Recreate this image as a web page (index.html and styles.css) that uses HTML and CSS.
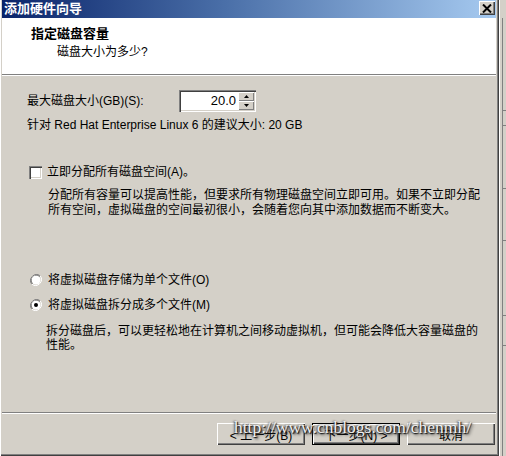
FILE: index.html
```html
<!DOCTYPE html>
<html lang="zh-CN">
<head>
    <meta charset="UTF-8">
    <title>添加硬件向导</title>
    <link rel="stylesheet" href="styles.css">
</head>
<body>

<div class="screen">
    <div class="dialog">
        <div class="titlebar">
            <span class="title">添加硬件向导</span>
            <span class="close">
                <svg width="10" height="9" viewBox="0 0 10 9">
                    <path d="M1 0.5 L9 8.5 M9 0.5 L1 8.5" stroke="#000" stroke-width="2"/>
                </svg>
            </span>
        </div>

        <div class="header">
            <div class="header-title">指定磁盘容量</div>
            <div class="header-sub">磁盘大小为多少?</div>
        </div>

        <div class="body">
            <div class="size-row">
                <label class="size-label" for="size">最大磁盘大小(GB)(S):</label>
                <div class="spin">
                    <input id="size" class="spin-input" type="text" value="20.0">
                    <div class="spin-btns">
                        <span class="spin-btn"><svg width="5" height="3" viewBox="0 0 5 3"><path d="M2.5 0 L5 3 L0 3 Z" fill="#000"/></svg></span>
                        <span class="spin-btn"><svg width="5" height="3" viewBox="0 0 5 3"><path d="M0 0 L5 0 L2.5 3 Z" fill="#000"/></svg></span>
                    </div>
                </div>
            </div>
            <div class="hint">针对 Red Hat Enterprise Linux 6 的建议大小: 20 GB</div>

            <label class="option check-row">
                <span class="checkbox"></span>
                <span>立即分配所有磁盘空间(A)。</span>
            </label>
            <div class="desc desc-check">分配所有容量可以提高性能，但要求所有物理磁盘空间立即可用。如果不立即分配<br>所有空间，虚拟磁盘的空间最初很小，会随着您向其中添加数据而不断变大。</div>

            <label class="option radio-first">
                <svg class="radio" width="12" height="12" viewBox="0 0 12 12">
                    <path d="M10.2 1.8 A6 6 0 0 0 1.8 10.2" fill="none" stroke="#808080"/>
                    <path d="M9.5 2.5 A5 5 0 0 0 2.5 9.5" fill="none" stroke="#404040"/>
                    <path d="M1.8 10.2 A6 6 0 0 0 10.2 1.8" fill="none" stroke="#fff"/>
                    <circle cx="6" cy="6" r="4.5" fill="#fff"/>
                </svg>
                <span>将虚拟磁盘存储为单个文件(O)</span>
            </label>
            <label class="option radio-second">
                <svg class="radio" width="12" height="12" viewBox="0 0 12 12">
                    <path d="M10.2 1.8 A6 6 0 0 0 1.8 10.2" fill="none" stroke="#808080"/>
                    <path d="M9.5 2.5 A5 5 0 0 0 2.5 9.5" fill="none" stroke="#404040"/>
                    <path d="M1.8 10.2 A6 6 0 0 0 10.2 1.8" fill="none" stroke="#fff"/>
                    <circle cx="6" cy="6" r="4.5" fill="#fff"/>
                    <circle cx="6" cy="6" r="2" fill="#000"/>
                </svg>
                <span>将虚拟磁盘拆分成多个文件(M)</span>
            </label>
            <div class="desc desc-radio">拆分磁盘后，可以更轻松地在计算机之间移动虚拟机，但可能会降低大容量磁盘的<br>性能。</div>
        </div>

        <div class="footer">
            <button type="button" class="btn">&lt; 上一步(B)</button>
            <button type="button" class="btn btn-default">下一步(N) &gt;</button>
            <button type="button" class="btn">取消</button>
            <span class="watermark">http://www.cnblogs.com/chenmh/</span>
        </div>
    </div>
    <div class="backdrop">
        <span class="tick t1"></span>
        <span class="tick t2"></span>
        <span class="tick t3"></span>
        <span class="tick t4"></span>
        <span class="tick t5"></span>
        <span class="tick t6"></span>
    </div>
</div>

</body>
</html>
```

FILE: styles.css
```css
body {
    margin: 0;
    font-family: "Liberation Sans", "Noto Sans CJK SC", sans-serif;
    font-size: 12px;
    color: #000;
    background-color: #d4d0c8;
}
.screen {
    display: flex;
    width: 506px;
    height: 456px;
    overflow: hidden;
}
.dialog {
    position: relative;
    width: 499px;
    height: 456px;
    box-sizing: border-box;
    padding: 0 3px 3px 2px;
    background-color: #d4d0c8;
    box-shadow: inset 1px 0 #fff, inset -1px -1px #404040, inset -2px -2px #808080;
    display: flex;
    flex-direction: column;
}
.titlebar {
    height: 18px;
    display: flex;
    align-items: center;
    justify-content: space-between;
    padding: 0 1px 0 2px;
    background: linear-gradient(to right, #0a246a, #4a6fa8 45%, #a6caf0);
}
.title {
    color: #fff;
    font-weight: bold;
    font-size: 13px;
    line-height: 18px;
}
.close {
    width: 16px;
    height: 14px;
    margin-bottom: 2px;
    box-sizing: border-box;
    display: flex;
    align-items: center;
    justify-content: center;
    background-color: #d4d0c8;
    box-shadow: inset 1px 1px #fff, inset -1px -1px #404040, inset -2px -2px #808080;
}
.header {
    height: 57px;
    box-sizing: border-box;
    padding: 9px 0 0 29px;
    background-color: #fff;
    border-bottom: 1px solid #808080;
    box-shadow: 0 1px #fff;
    line-height: 14px;
}
.header-title {
    font-weight: bold;
    font-size: 13px;
}
.header-sub {
    margin: 4px 0 0 26px;
}
.body {
    flex: 1;
    padding: 15px 0 0 25px;
    line-height: 14px;
    border-bottom: 1px solid #808080;
    box-shadow: 0 1px #fff;
}
.size-row {
    display: flex;
    align-items: center;
}
.size-label {
    width: 152px;
}
.spin {
    display: flex;
    width: 77px;
    height: 22px;
    box-sizing: border-box;
    padding: 2px;
    background-color: #fff;
    box-shadow: inset 1px 1px #808080, inset 2px 2px #404040, inset -1px -1px #fff, inset -2px -2px #d4d0c8;
}
.spin-input {
    flex: 1;
    width: 40px;
    border: none;
    padding: 0 2px 0 0;
    font: inherit;
    font-size: 13px;
    text-align: right;
    outline: none;
    background: transparent;
}
.spin-btns {
    display: flex;
    flex-direction: column;
    width: 16px;
}
.spin-btn {
    flex: 1;
    display: flex;
    align-items: center;
    justify-content: center;
    background-color: #d4d0c8;
    box-shadow: inset 1px 1px #fff, inset -1px -1px #808080;
}
.hint {
    margin-top: 6px;
}
.option {
    display: flex;
    align-items: center;
    gap: 5px;
    padding-left: 2px;
}
.check-row {
    margin-top: 33px;
}
.checkbox {
    width: 13px;
    height: 13px;
    box-sizing: border-box;
    background-color: #fff;
    box-shadow: inset 1px 1px #808080, inset 2px 2px #404040, inset -1px -1px #fff, inset -2px -2px #d4d0c8;
}
.radio {
    margin-left: 1px;
    margin-right: 1px;
}
.desc {
    line-height: 15px;
}
.desc-check {
    margin: 9px 0 0 21px;
}
.radio-first {
    margin-top: 55px;
}
.radio-second {
    margin-top: 11px;
}
.desc-radio {
    margin: 12px 0 0 19px;
    line-height: 14px;
}
.footer {
    position: relative;
    height: 38px;
    display: flex;
    justify-content: flex-end;
    align-items: flex-start;
    gap: 7px;
    padding: 8px 1px 0 0;
    box-sizing: border-box;
    margin-top: 2px;
}
.btn {
    width: 88px;
    height: 22px;
    padding: 0;
    border: none;
    font: inherit;
    background-color: #d4d0c8;
    box-shadow: inset 1px 1px #fff, inset -1px -1px #404040, inset -2px -2px #808080;
}
.btn-default {
    border: 1px solid #000;
}
.watermark {
    position: absolute;
    left: 232px;
    top: 2px;
    font-family: "Liberation Serif", serif;
    font-size: 17.5px;
    color: #f0f0f0;
    text-shadow: 1px 1px 1px #111, 2px 2px 3px #333, -1px 0 2px #444;
    white-space: nowrap;
}
.backdrop {
    position: relative;
    flex: 1;
    background-color: #d4d0c8;
    border-left: 1px solid #fff;
}
.backdrop::before {
    content: "";
    position: absolute;
    left: 2px;
    top: 18px;
    bottom: 0;
    border-left: 1px solid #808080;
}
.tick {
    position: absolute;
    left: 2px;
    right: 0;
    border-top: 1px solid #808080;
}
.t1 { top: 110px; }
.t2 { top: 125px; }
.t3 { top: 188px; }
.t4 { top: 240px; }
.t5 { top: 315px; }
.t6 { top: 345px; }
```
